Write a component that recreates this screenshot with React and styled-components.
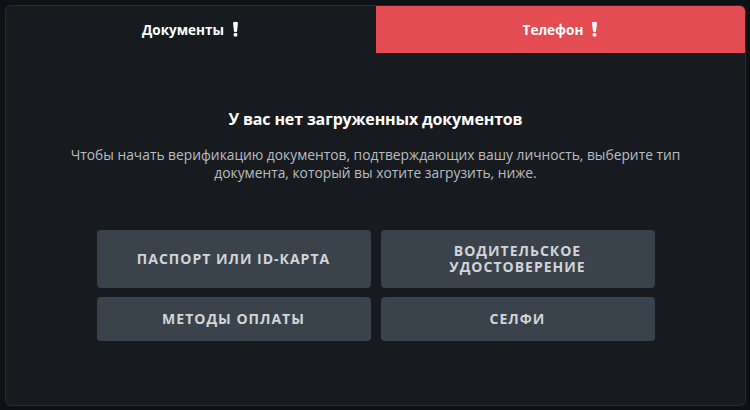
import styled, { createGlobalStyle } from "styled-components";

const GlobalStyle = createGlobalStyle`
  html, body {
    margin: 0;
    padding: 0;
    background: #0e1114;
    font-family: "Open Sans", "Noto Sans", sans-serif;
  }
`;

const Alert = () => (
  <svg width="7" height="16" viewBox="0 0 7 16">
    <path d="M1 1.5 Q3.5 0 6 1.5 L5 10.5 Q3.5 11.5 2 10.5 Z" fill="#fff" />
    <circle cx="3.5" cy="13.8" r="2" fill="#fff" />
  </svg>
);

const App = () => {
  return (
    <Page>
      <GlobalStyle />
      <Panel>
        <Tabs>
          <Tab>
            Документы <Alert />
          </Tab>
          <Tab $active>
            Телефон <Alert />
          </Tab>
        </Tabs>
        <Body>
          <Title>У вас нет загруженных документов</Title>
          <Text>
            Чтобы начать верификацию документов, подтверждающих вашу личность, выберите тип
            документа, который вы хотите загрузить, ниже.
          </Text>
          <Grid>
            <DocButton $tall>Паспорт или ID-карта</DocButton>
            <DocButton $tall>
              Водительское
              <br />
              удостоверение
            </DocButton>
            <DocButton>Методы оплаты</DocButton>
            <DocButton>Селфи</DocButton>
          </Grid>
        </Body>
      </Panel>
    </Page>
  );
};

const Page = styled.div`
  padding: 5px 4px 4px 5px;
  height: 410px;
  box-sizing: border-box;
`;

const Panel = styled.div`
  height: 401px;
  box-sizing: border-box;
  background: #171b1f;
  border: 1px solid #262b30;
  border-radius: 6px;
  display: flex;
  flex-direction: column;
`;

const Tabs = styled.div`
  display: flex;
  height: 47px;
`;

const Tab = styled.div`
  flex: 1;
  display: flex;
  align-items: center;
  justify-content: center;
  gap: 8px;
  font-size: 13.5px;
  font-weight: 700;
  color: #fff;
  background: ${(p) => (p.$active ? "#e34c53" : "transparent")};
  border-top-right-radius: ${(p) => (p.$active ? "5px" : "0")};
  margin-left: ${(p) => (p.$active ? "1px" : "0")};
  svg {
    margin-top: -2px;
  }
`;

const Body = styled.div`
  display: flex;
  flex-direction: column;
  align-items: center;
  padding-top: 55px;
`;

const Title = styled.h2`
  margin: 0;
  font-size: 16px;
  font-weight: 700;
  color: #fff;
  letter-spacing: -0.15px;
`;

const Text = styled.p`
  margin: 16px 0 0;
  max-width: 630px;
  text-align: center;
  font-size: 13.8px;
  line-height: 18px;
  color: #b9bdc1;
`;

const Grid = styled.div`
  display: grid;
  grid-template-columns: 274px 274px;
  gap: 9px 10px;
  margin-top: 48px;
`;

const DocButton = styled.button`
  height: ${(p) => (p.$tall ? "58px" : "44px")};
  border: none;
  border-radius: 4px;
  background: #3a434c;
  color: #d2d5d8;
  font-family: "Open Sans", sans-serif;
  font-size: 14px;
  font-weight: 700;
  letter-spacing: 1px;
  line-height: 16px;
  text-transform: uppercase;
  cursor: pointer;
`;

export default App;
